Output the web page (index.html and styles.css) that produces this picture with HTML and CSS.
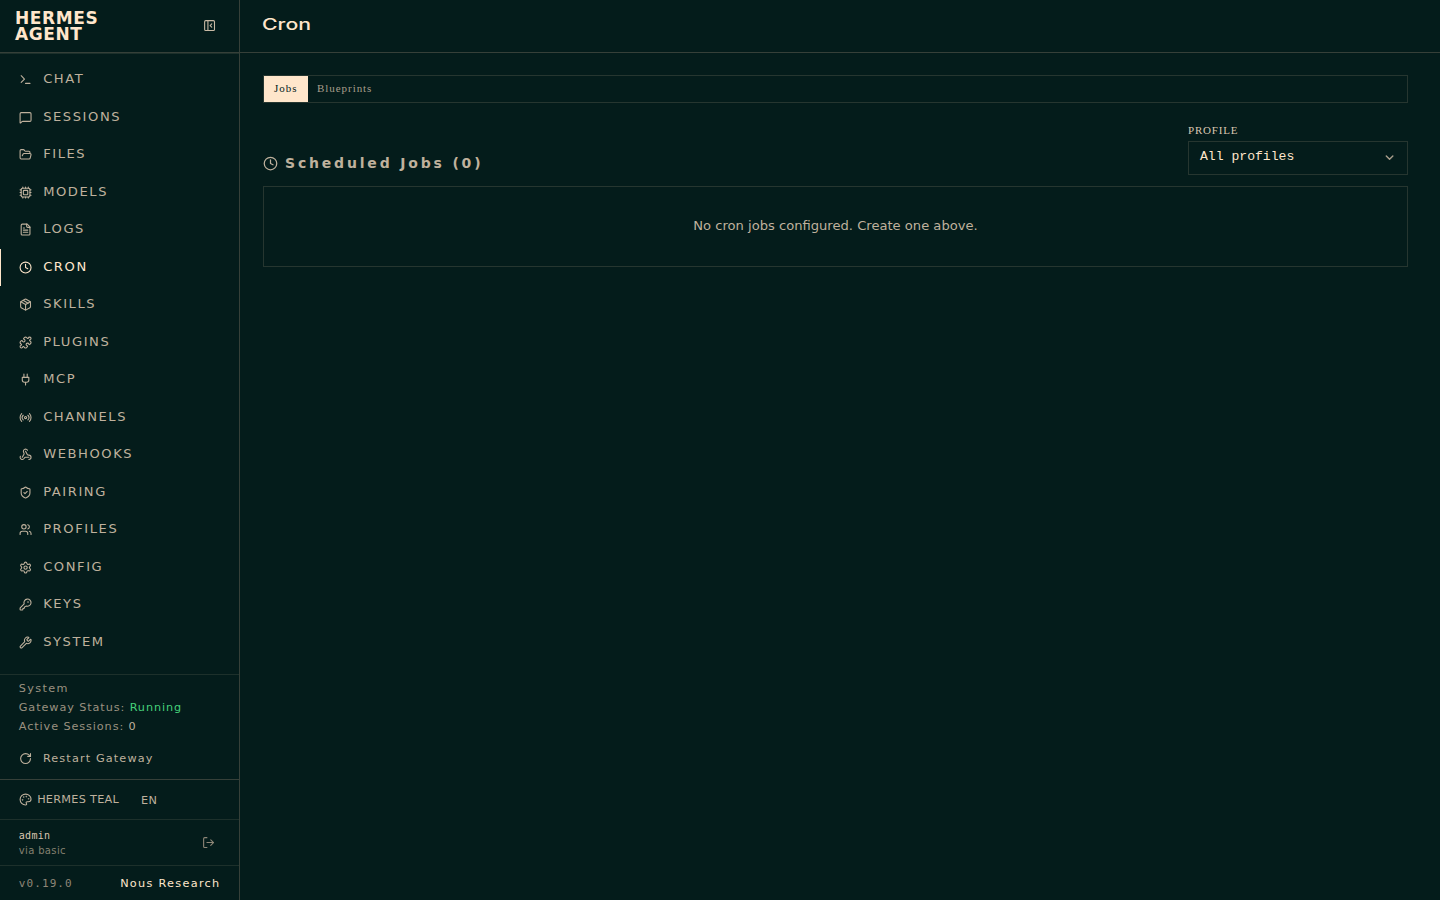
FILE: index.html
```
<!DOCTYPE html>
<html lang="en">
<head>
	<meta charset="utf-8" />
	<title>Hermes Agent - Cron</title>
	<link rel="stylesheet" href="styles.css">
</head>
<body>
	<div class="app">
		<div class="sidebar">
			<div class="brand">
				<div class="logo">HERMES<br />AGENT</div>
				<svg class="icon collapse" viewBox="0 0 24 24"><rect width="18" height="18" x="3" y="3" rx="2"/><path d="M9 3v18"/><path d="m16 15-3-3 3-3"/></svg>
			</div>
			<ul class="nav">
				<li><svg class="icon" viewBox="0 0 24 24"><path d="m4 17 6-6-6-6"/><path d="M12 19h8"/></svg><span>Chat</span></li>
				<li><svg class="icon" viewBox="0 0 24 24"><path d="M22 17a2 2 0 0 1-2 2H6.828a2 2 0 0 0-1.414.586l-2.202 2.202A.71.71 0 0 1 2 21.286V5a2 2 0 0 1 2-2h16a2 2 0 0 1 2 2z"/></svg><span>Sessions</span></li>
				<li><svg class="icon" viewBox="0 0 24 24"><path d="m6 14 1.5-2.9A2 2 0 0 1 9.24 10H20a2 2 0 0 1 1.94 2.5l-1.54 6a2 2 0 0 1-1.95 1.5H4a2 2 0 0 1-2-2V5a2 2 0 0 1 2-2h3.9a2 2 0 0 1 1.69.9l.81 1.2a2 2 0 0 0 1.67.9H18a2 2 0 0 1 2 2v2"/></svg><span>Files</span></li>
				<li><svg class="icon" viewBox="0 0 24 24"><path d="M12 20v2M12 2v2M17 20v2M17 2v2M2 12h2M2 17h2M2 7h2M20 12h2M20 17h2M20 7h2M7 20v2M7 2v2"/><rect x="4" y="4" width="16" height="16" rx="2"/><rect x="8" y="8" width="8" height="8" rx="1"/></svg><span>Models</span></li>
				<li><svg class="icon" viewBox="0 0 24 24"><path d="M15 2H6a2 2 0 0 0-2 2v16a2 2 0 0 0 2 2h12a2 2 0 0 0 2-2V7Z"/><path d="M14 2v4a2 2 0 0 0 2 2h4"/><path d="M10 9H8M16 13H8M16 17H8"/></svg><span>Logs</span></li>
				<li class="active"><svg class="icon" viewBox="0 0 24 24"><circle cx="12" cy="12" r="10"/><path d="M12 6v6l4 2"/></svg><span>Cron</span></li>
				<li><svg class="icon" viewBox="0 0 24 24"><path d="M11 21.73a2 2 0 0 0 2 0l7-4A2 2 0 0 0 21 16V8a2 2 0 0 0-1-1.73l-7-4a2 2 0 0 0-2 0l-7 4A2 2 0 0 0 3 8v8a2 2 0 0 0 1 1.73z"/><path d="M12 22V12"/><path d="M3.29 7 12 12l8.71-5"/><path d="m7.5 4.27 9 5.15"/></svg><span>Skills</span></li>
				<li><svg class="icon" viewBox="0 0 24 24"><path d="M15.39 4.39a1 1 0 0 0 1.68-.474 2.5 2.5 0 1 1 3.014 3.015 1 1 0 0 0-.474 1.68l1.683 1.682a2.414 2.414 0 0 1 0 3.414L19.61 15.39a1 1 0 0 1-1.68-.474 2.5 2.5 0 1 0-3.014 3.015 1 1 0 0 1 .474 1.68l-1.683 1.682a2.414 2.414 0 0 1-3.414 0L8.61 19.61a1 1 0 0 0-1.68.474 2.5 2.5 0 1 1-3.014-3.015 1 1 0 0 0 .474-1.68l-1.683-1.682a2.414 2.414 0 0 1 0-3.414L4.39 8.61a1 1 0 0 1 1.68.474 2.5 2.5 0 1 0 3.014-3.015 1 1 0 0 1-.474-1.68l1.683-1.682a2.414 2.414 0 0 1 3.414 0z"/></svg><span>Plugins</span></li>
				<li><svg class="icon" viewBox="0 0 24 24"><path d="M12 22v-5M9 8V2M15 8V2"/><path d="M18 8v5a4 4 0 0 1-4 4h-4a4 4 0 0 1-4-4V8Z"/></svg><span>MCP</span></li>
				<li><svg class="icon" viewBox="0 0 24 24"><path d="M16.247 7.761a6 6 0 0 1 0 8.478"/><path d="M19.075 4.933a10 10 0 0 1 0 14.134"/><path d="M4.925 19.067a10 10 0 0 1 0-14.134"/><path d="M7.753 16.239a6 6 0 0 1 0-8.478"/><circle cx="12" cy="12" r="2"/></svg><span>Channels</span></li>
				<li><svg class="icon" viewBox="0 0 24 24"><path d="M18 16.98h-5.99c-1.1 0-1.95.94-2.48 1.9A4 4 0 0 1 2 17c.01-.7.2-1.4.57-2"/><path d="m6 17 3.13-5.78c.53-.97.1-2.18-.5-3.1a4 4 0 1 1 6.89-4.06"/><path d="m12 6 3.13 5.73C15.66 12.7 16.9 13 18 13a4 4 0 0 1 0 8"/></svg><span>Webhooks</span></li>
				<li><svg class="icon" viewBox="0 0 24 24"><path d="M20 13c0 5-3.5 7.5-7.66 8.95a1 1 0 0 1-.67-.01C7.5 20.5 4 18 4 13V6a1 1 0 0 1 1-1c2 0 4.5-1.2 6.24-2.72a1.17 1.17 0 0 1 1.52 0C14.51 3.81 17 5 19 5a1 1 0 0 1 1 1z"/><path d="m9 12 2 2 4-4"/></svg><span>Pairing</span></li>
				<li><svg class="icon" viewBox="0 0 24 24"><path d="M16 21v-2a4 4 0 0 0-4-4H6a4 4 0 0 0-4 4v2"/><path d="M16 3.128a4 4 0 0 1 0 7.744"/><path d="M22 21v-2a4 4 0 0 0-3-3.87"/><circle cx="9" cy="7" r="4"/></svg><span>Profiles</span></li>
				<li><svg class="icon" viewBox="0 0 24 24"><path d="M9.671 4.136a2.34 2.34 0 0 1 4.659 0 2.34 2.34 0 0 0 3.319 1.915 2.34 2.34 0 0 1 2.33 4.033 2.34 2.34 0 0 0 0 3.831 2.34 2.34 0 0 1-2.33 4.033 2.34 2.34 0 0 0-3.319 1.915 2.34 2.34 0 0 1-4.659 0 2.34 2.34 0 0 0-3.32-1.915 2.34 2.34 0 0 1-2.33-4.033 2.34 2.34 0 0 0 0-3.831A2.34 2.34 0 0 1 6.35 6.051a2.34 2.34 0 0 0 3.319-1.915"/><circle cx="12" cy="12" r="3"/></svg><span>Config</span></li>
				<li><svg class="icon" viewBox="0 0 24 24"><path d="M2.586 17.414A2 2 0 0 0 2 18.828V21a1 1 0 0 0 1 1h3a1 1 0 0 0 1-1v-1a1 1 0 0 1 1-1h1a1 1 0 0 0 1-1v-1a1 1 0 0 1 1-1h.172a2 2 0 0 0 1.414-.586l.814-.814a6.5 6.5 0 1 0-4-4z"/><circle cx="16.5" cy="7.5" r=".5" fill="currentColor"/></svg><span>Keys</span></li>
				<li><svg class="icon" viewBox="0 0 24 24"><path d="M14.7 6.3a1 1 0 0 0 0 1.4l1.6 1.6a1 1 0 0 0 1.4 0l3.106-3.105c.32-.322.863-.22.983.218a6 6 0 0 1-8.259 7.057l-7.91 7.91a1 1 0 0 1-2.999-3l7.91-7.91a6 6 0 0 1 7.057-8.259c.438.12.54.662.219.984z"/></svg><span>System</span></li>
			</ul>
			<div class="status">
				<p class="label">System</p>
				<p>Gateway Status: <span class="running">Running</span></p>
				<p>Active Sessions: <span class="count">0</span></p>
				<div class="restart"><svg class="icon" viewBox="0 0 24 24"><path d="M21 12a9 9 0 1 1-9-9c2.52 0 4.93 1 6.74 2.74L21 8"/><path d="M21 3v5h-5"/></svg><span>Restart Gateway</span></div>
			</div>
			<div class="theme">
				<svg class="icon" viewBox="0 0 24 24"><path d="M12 22a1 1 0 0 1 0-20 10 9 0 0 1 10 9 5 5 0 0 1-5 5h-2.25a1.75 1.75 0 0 0-1.4 2.8l.3.4a1.75 1.75 0 0 1-1.4 2.8z"/><circle cx="13.5" cy="6.5" r=".5"/><circle cx="17.5" cy="10.5" r=".5"/><circle cx="6.5" cy="12.5" r=".5"/><circle cx="8.5" cy="7.5" r=".5"/></svg>
				<span class="theme-name">Hermes Teal</span>
				<span class="lang">EN</span>
			</div>
			<div class="user">
				<div>
					<p class="name">admin</p>
					<p class="via">via basic</p>
				</div>
				<svg class="icon logout" viewBox="0 0 24 24"><path d="m16 17 5-5-5-5"/><path d="M21 12H9"/><path d="M9 21H5a2 2 0 0 1-2-2V5a2 2 0 0 1 2-2h4"/></svg>
			</div>
			<div class="ft">
				<span class="version">v0.19.0</span>
				<span class="org">Nous Research</span>
			</div>
		</div>
		<div class="main">
			<div class="hd"><h1>Cron</h1></div>
			<div class="content">
				<div class="tabs">
					<span class="tab on">Jobs</span>
					<span class="tab">Blueprints</span>
				</div>
				<div class="toolbar">
					<h2><svg class="icon" viewBox="0 0 24 24"><circle cx="12" cy="12" r="10"/><path d="M12 6v6l4 2"/></svg><span>Scheduled Jobs (0)</span></h2>
					<div class="profile">
						<label>Profile</label>
						<div class="select"><span>All profiles</span><svg class="icon" viewBox="0 0 24 24"><path d="m6 9 6 6 6-6"/></svg></div>
					</div>
				</div>
				<div class="empty">No cron jobs configured. Create one above.</div>
			</div>
		</div>
	</div>
</body>
</html>
```
FILE: styles.css
```
*{
	box-sizing:border-box;
}
body,html,div,h1,h2,p,ul{
	padding:0;
	margin:0;
}
body{
	height:900px;
	overflow:hidden;
	background-color:#041c1b;
	color:#ffe6cb;
	font-family:"DejaVu Sans", Verdana, sans-serif;
	font-size:13.1px;
}
.app{
	display:flex;
	height:900px;
}
.icon{
	display:block;
	flex:none;
	width:13.125px;
	height:13.125px;
	fill:none;
	stroke:currentColor;
	stroke-width:2;
	stroke-linecap:round;
	stroke-linejoin:round;
}

/* sidebar */
.sidebar{
	display:flex;
	flex-direction:column;
	flex:none;
	width:240px;
	border-right:1px solid #364039;
}
.brand{
	display:flex;
	align-items:center;
	justify-content:space-between;
	height:53px;
	padding:0 23px 0 15px;
	border-bottom:1px solid #364039;
	box-shadow:0 1px #1d302b;
}
.logo{
	font-size:17px;
	font-weight:bold;
	line-height:16px;
	letter-spacing:.6px;
}
.collapse{
	margin-bottom:1px;
	color:#c9baa5;
}
.nav{
	list-style:none;
	flex:1;
	padding-top:8px;
}
.nav li{
	display:flex;
	align-items:center;
	gap:11px;
	height:37.5px;
	padding-left:18px;
	border-left:1px solid transparent;
	color:#bfb19d;
	letter-spacing:1.57px;
	text-transform:uppercase;
}
.nav li span{
	padding-bottom:2px;
}
.nav li.active{
	border-left-color:#ffe6cb;
	color:#ffe6cb;
}
.status{
	height:105px;
	padding:4px 18.75px 0;
	border-top:1px solid #1d302b;
	color:#9a9180;
	font-size:11.25px;
	line-height:19px;
	letter-spacing:.9px;
}
.status .label{
	letter-spacing:1.35px;
}
.running{
	color:#44d17a;
}
.count{
	color:#bfb19d;
}
.restart{
	display:flex;
	align-items:center;
	gap:11px;
	margin-top:13px;
	color:#bfb19d;
	letter-spacing:1.13px;
}
.theme{
	display:flex;
	align-items:center;
	height:40px;
	padding-left:19px;
	border-top:1px solid #364039;
	color:#bfb19d;
	font-size:11.25px;
}
.theme-name{
	padding-left:5px;
	letter-spacing:.28px;
	text-transform:uppercase;
}
.lang{
	padding:2px 0 0 22px;
	letter-spacing:.28px;
}
.user{
	display:flex;
	align-items:center;
	justify-content:space-between;
	height:46px;
	padding:0 24px 0 18.75px;
	border-top:1px solid #1d302b;
	font-size:10px;
	line-height:15px;
}
.name{
	color:#d9c6b0;
	font-family:"DejaVu Sans Mono", monospace;
	letter-spacing:.3px;
}
.via{
	color:#83806f;
	letter-spacing:.35px;
}
.logout{
	color:#8f8778;
}
.ft{
	display:flex;
	align-items:center;
	justify-content:space-between;
	height:35px;
	padding:1px 18.5px 0 18.75px;
	border-top:1px solid #1d302b;
	font-size:11.25px;
}
.version{
	color:#8f8778;
	font-family:"DejaVu Sans Mono", monospace;
	font-size:11px;
	letter-spacing:1.1px;
}
.org{
	letter-spacing:1.3px;
}

/* page */
.main{
	flex:1;
}
.hd{
	height:53px;
	padding:14px 22px 0;
	border-bottom:1px solid #364039;
}
.hd h1{
	display:inline-block;
	font-family:Inter, "Open Sans", sans-serif;
	font-size:15.5px;
	font-weight:500;
	line-height:22px;
	transform:scaleX(1.37);
	transform-origin:left;
}
.content{
	padding:22px 32px 0 23px;
}
.tabs{
	display:flex;
	height:28px;
	border:1px solid #263630;
	font-family:"Liberation Serif", serif;
	font-size:11px;
	letter-spacing:.95px;
	line-height:25px;
}
.tab{
	padding:0 9px;
	color:#a99e8c;
}
.tab.on{
	width:44px;
	padding-left:10px;
	background-color:#ffe6cb;
	color:#041c1b;
}
.toolbar{
	display:flex;
	justify-content:space-between;
	align-items:flex-end;
	height:72px;
}
.toolbar h2{
	display:flex;
	align-items:center;
	gap:7px;
	padding-bottom:3px;
	color:#bfb19d;
	font-size:14px;
	line-height:17px;
	letter-spacing:2.82px;
}
.toolbar h2 .icon{
	width:15px;
	height:15px;
}
.profile{
	width:220px;
}
.profile label{
	display:block;
	height:17px;
	color:#d9c6b0;
	font-family:"Liberation Serif", serif;
	font-size:11px;
	line-height:12px;
	letter-spacing:.8px;
	text-transform:uppercase;
}
.select{
	display:flex;
	align-items:center;
	justify-content:space-between;
	height:34px;
	padding:0 11px;
	border:1px solid #263630;
	font-family:"Liberation Mono", monospace;
}
.select span{
	padding-bottom:3px;
}
.select .icon{
	margin-bottom:1px;
	color:#a99e8c;
	stroke-width:2.6;
}
.empty{
	height:81px;
	margin-top:11px;
	border:1px solid #263630;
	color:#bfb19d;
	line-height:78px;
	text-align:center;
}
```
